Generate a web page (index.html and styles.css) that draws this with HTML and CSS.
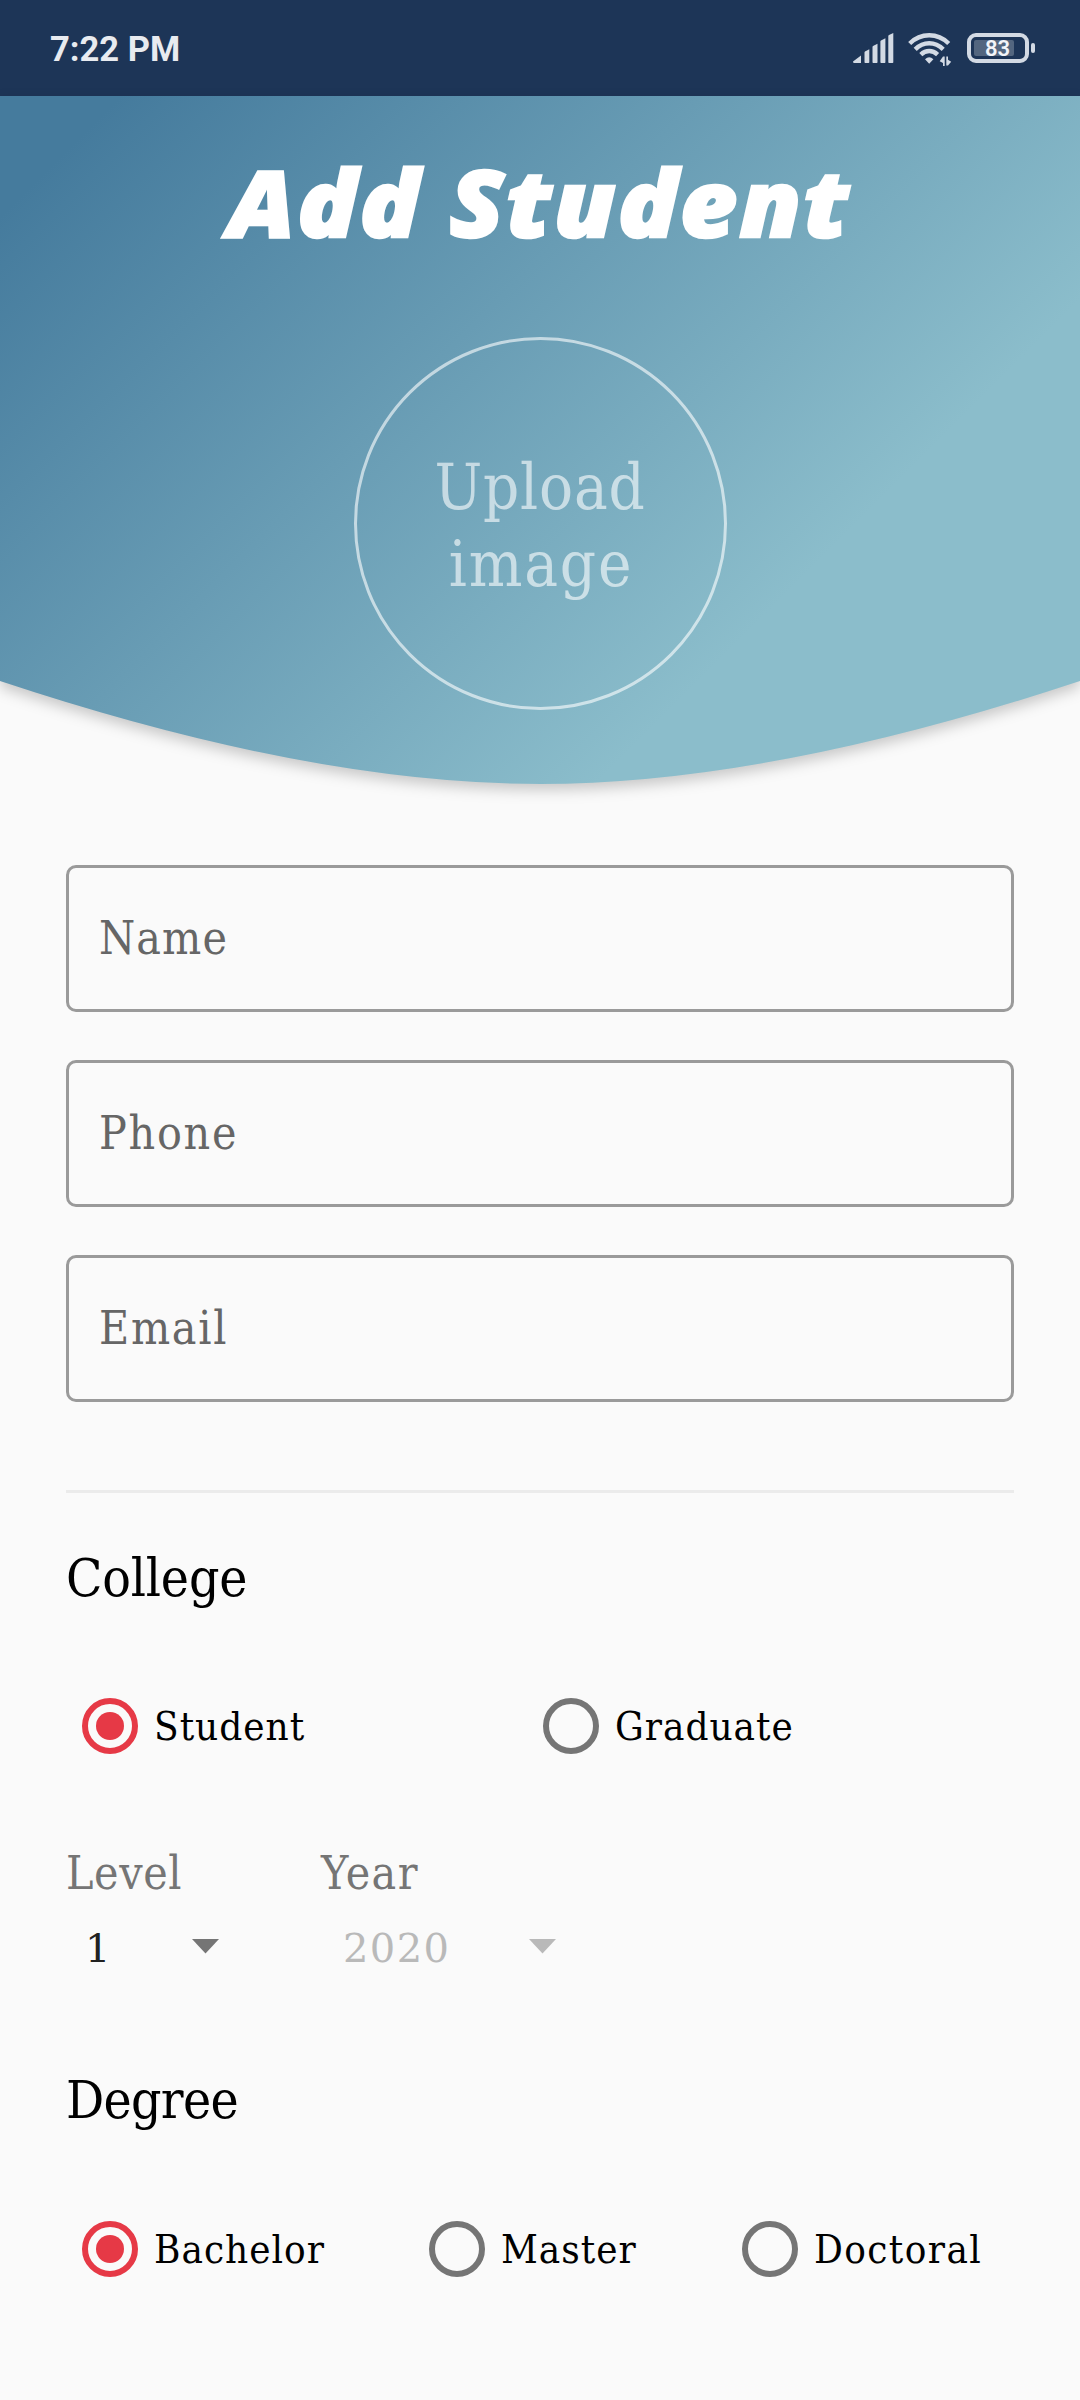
FILE: index.html
```html
<!DOCTYPE html>
<html lang="en">
<head>
<meta charset="utf-8">
<title>Add Student</title>
<link rel="stylesheet" href="styles.css">
</head>
<body>
<div class="screen">
  <div class="status">
    <span class="time">7:22 PM</span>
    <div class="indicators">
      <svg class="signal" viewBox="0 0 42 32" width="42" height="32">
        <path d="M0 28.5 8 22.5V30H1.2Q0 30 0 28.5ZM11.5 19.5Q11.5 18.8 12 18.4L16.3 16.2V29.2Q16.3 30 15.5 30H12.3Q11.5 30 11.5 29.2ZM19.5 14Q19.5 13.3 20 13L24.5 10.8V29.2Q24.5 30 23.7 30H20.3Q19.5 30 19.5 29.2ZM27.4 8.5Q27.4 7.8 28 7.4L32.4 5.2V29.2Q32.4 30 31.6 30H28.2Q27.4 30 27.4 29.2ZM35.3 3Q35.3 2.3 36 2L40.3 0V29.2Q40.3 30 39.5 30H36.1Q35.3 30 35.3 29.2Z" fill="#d3dae4"/>
      </svg>
      <svg class="wifi" viewBox="0 0 44 34" width="44" height="34">
        <g fill="none" stroke="#d3dae4" stroke-width="4.4">
          <path d="M1.7 11.5Q10 3.3 21.2 3.3T40.7 11.5"/>
          <path d="M7.2 17.4Q13.4 11.3 21.2 11.3T35.2 17.4"/>
          <path d="M12.8 22.6Q16.6 19 21.2 19T29.6 22.6"/>
        </g>
        <path d="M17 27.2Q21.2 23.4 25.4 27.2L21.2 31.8ZM35 24.5h1.7v9.5H35v-3l-3.3-1.8 3.3-4.7ZM38.3 24.5H40v3.2l3.2 2L40 33.5h-1.7Z" fill="#d3dae4"/>
      </svg>
      <div class="battery">
        <div class="battery-case"><span class="battery-fill"></span><span class="battery-text">83</span></div>
        <span class="battery-cap"></span>
      </div>
    </div>
  </div>

  <header class="hero">
    <div class="hero-shape">
      <h1 class="title">Add Student</h1>
      <div class="upload"><span class="upload-a">Upload</span><span class="upload-b">image</span></div>
    </div>
  </header>

  <main class="form">
    <div class="fields">
      <div class="field">Name</div>
      <div class="field wide">Phone</div>
      <div class="field wide">Email</div>
    </div>
    <div class="divider"></div>

    <h2 class="heading">College</h2>
    <div class="options two">
      <div class="option"><span class="radio on"></span>Student</div>
      <div class="option"><span class="radio"></span>Graduate</div>
    </div>

    <div class="selects">
      <div class="select">
        <div class="label">Level</div>
        <div class="value"><span>1</span><svg class="caret" viewBox="0 0 27 15" width="27" height="15"><path d="M0 0H27L13.5 14.5Z" fill="currentColor"/></svg></div>
      </div>
      <div class="select disabled">
        <div class="label year">Year</div>
        <div class="value"><span>2020</span><svg class="caret" viewBox="0 0 27 15" width="27" height="15"><path d="M0 0H27L13.5 14.5Z" fill="currentColor"/></svg></div>
      </div>
    </div>

    <h2 class="heading degree">Degree</h2>
    <div class="options three">
      <div class="option"><span class="radio on"></span>Bachelor</div>
      <div class="option"><span class="radio"></span>Master</div>
      <div class="option loose"><span class="radio"></span>Doctoral</div>
    </div>
  </main>
</div>
</body>
</html>
```
FILE: styles.css
```css
* { box-sizing: border-box; }
body {
  margin: 0;
  background: #fafafa;
  font-family: "DejaVu Serif Condensed", "DejaVu Serif", serif;
  font-stretch: condensed;
  color: #000;
}
.screen { width: 1080px; height: 2400px; overflow: hidden; }

/* Status bar */
.status {
  height: 96px;
  padding: 0 45px 0 50px;
  display: flex;
  align-items: center;
  justify-content: space-between;
  background: #1d3557;
  font-family: Roboto, sans-serif;
  font-stretch: normal;
}
.time { font-size: 34.5px; font-weight: 700; line-height: 40px; color: #e8ebf0; padding-top: 1px; }
.indicators { display: flex; align-items: flex-start; height: 32px; }
.wifi { margin-left: 13px; }
.signal { margin-top: 1px; }
.battery { display: flex; align-items: center; margin-left: 15px; margin-top: 1px; }
.battery-case {
  display: flex;
  align-items: center;
  width: 62px;
  height: 30px;
  border: 4px solid #d3dae4;
  border-radius: 9px;
  padding-left: 3px;
}
.battery-fill { width: 40px; height: 16px; border-radius: 2px; background: #53667f; }
.battery-text { margin-left: -29px; font-size: 22px; font-weight: 600; line-height: 22px; color: #f2f4f8; padding-top: 2px; }
.battery-cap { width: 4px; height: 10px; margin-left: 2px; border-radius: 2px; background: #d3dae4; }

/* Curved header */
.hero { filter: drop-shadow(0 6px 7px rgba(0, 0, 0, 0.2)); }
.hero-shape {
  height: 688px;
  padding-top: 56px;
  display: flex;
  flex-direction: column;
  align-items: center;
  background: linear-gradient(135deg, #457b9d 85px, #8bbdcb 908px);
  clip-path: path("M0 0H1080V585Q770 688 540 688Q310 688 0 585Z");
}
.title {
  margin: 0;
  font: italic 800 92px/100px "Open Sans", "Noto Sans", sans-serif;
  letter-spacing: 2px;
  color: #fff;
  white-space: nowrap;
  transform: scaleX(1.08);
  -webkit-text-stroke: 2.5px #fff;
}
.upload {
  width: 373px;
  height: 373px;
  margin-top: 85px;
  padding-top: 4px;
  display: flex;
  flex-direction: column;
  align-items: center;
  justify-content: center;
  border: 3px solid rgba(255, 255, 255, 0.6);
  border-radius: 50%;
  font-size: 63px;
  line-height: 77px;
  color: rgba(255, 255, 255, 0.6);
}
.upload-a { letter-spacing: 0.8px; }
.upload-b { letter-spacing: 1.8px; padding-left: 2px; }

/* Form */
.form { padding: 81px 66px 0; }
.fields { display: flex; flex-direction: column; gap: 48px; }
.field {
  display: flex;
  align-items: center;
  height: 147px;
  padding: 0 0 1px 30px;
  border: 3px solid #9a9a9a;
  border-radius: 10px;
  font-size: 46px;
  letter-spacing: 1.1px;
  color: #666;
}
.field.wide { letter-spacing: 1.7px; }
.divider { height: 3px; margin-top: 88px; background: #ebebeb; }
.heading { margin: 55px 0 0; font-size: 53px; font-weight: 400; line-height: 60px; letter-spacing: -0.2px; }
.heading.degree { margin-top: 102px; letter-spacing: -0.7px; }
.options {
  display: grid;
  height: 60px;
  margin-top: 88px;
  padding-left: 16px;
  font-size: 40px;
  letter-spacing: 1px;
}
.options.two { grid-template-columns: 461px 1fr; }
.options.three { grid-template-columns: 347px 313px 1fr; margin-top: 89px; }
.option { display: flex; align-items: center; gap: 16px; white-space: nowrap; }
.option.loose { letter-spacing: 1.4px; }
.radio {
  display: flex;
  align-items: center;
  justify-content: center;
  flex: none;
  width: 56px;
  height: 56px;
  border: 6px solid #757575;
  border-radius: 50%;
}
.radio.on { border-color: #e63946; }
.radio.on::before { content: ""; width: 28px; height: 28px; border-radius: 50%; background: #e63946; }

.selects { display: flex; margin-top: 92px; color: #212121; }
.select { width: 255px; }
.label { font-size: 46px; line-height: 50px; letter-spacing: 0.6px; color: #757575; }
.label.year { letter-spacing: 1.4px; }
.value {
  display: flex;
  align-items: center;
  justify-content: space-between;
  height: 40px;
  margin-top: 30px;
  padding: 0 102px 0 19px;
  font-size: 40px;
  font-stretch: normal;
  font-family: "DejaVu Serif", serif;
  line-height: 40px;
  letter-spacing: 1.4px;
}
.caret { color: #757575; margin-top: -3px; }
.disabled { color: #b9b9b9; width: 240px; }
.disabled .value { padding: 0 5px 0 22px; }
.disabled .caret { color: #b9b9b9; }
```
